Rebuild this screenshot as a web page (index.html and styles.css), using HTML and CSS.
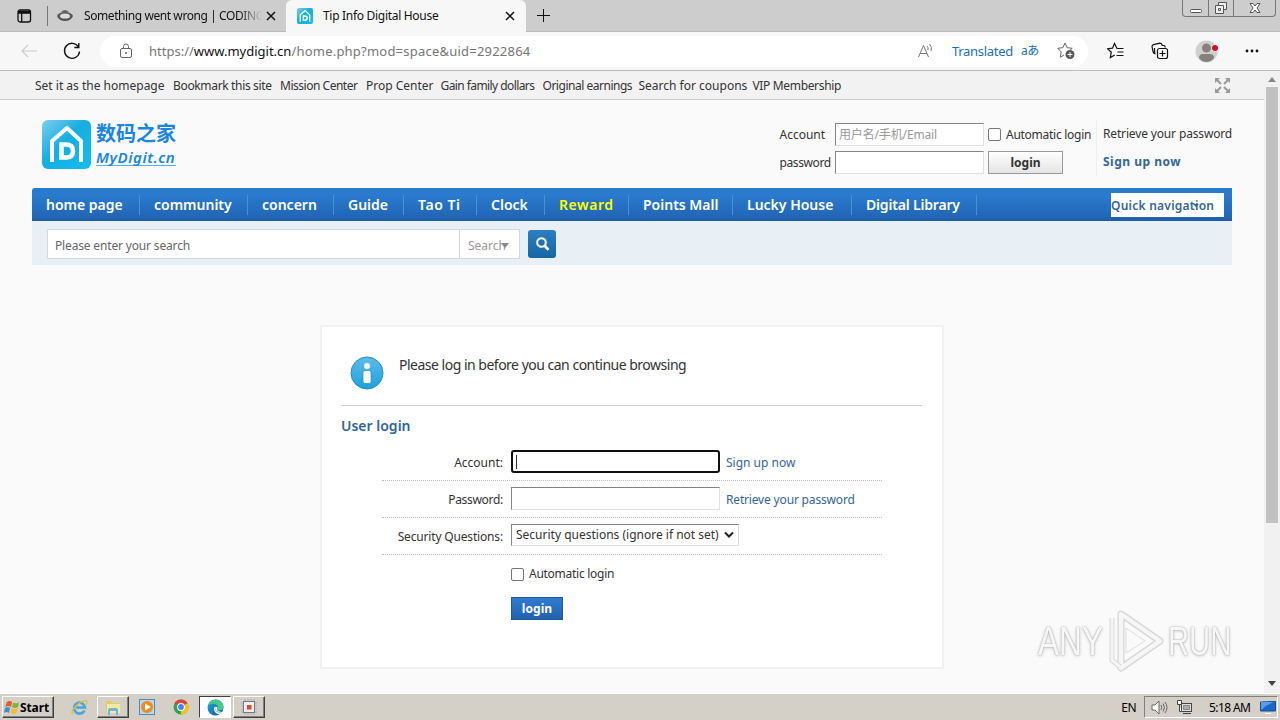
FILE: index.html
```html
<!DOCTYPE html>
<html lang="en">
<head>
    <meta charset="UTF-8">
    <title>Tip Info Digital House</title>
    <link rel="stylesheet" href="styles.css">
</head>
<body>
    <svg width="0" height="0" class="defs">
        <defs>
            <linearGradient id="house" x1="0" y1="0" x2="1" y2="1">
                <stop offset="0" stop-color="#7ccfee"/>
                <stop offset=".45" stop-color="#16aee0"/>
                <stop offset="1" stop-color="#12bdf0"/>
            </linearGradient>
            <linearGradient id="info" x1="0" y1="0" x2="0" y2="1">
                <stop offset="0" stop-color="#5cbcea"/>
                <stop offset="1" stop-color="#1da0dc"/>
            </linearGradient>
            <linearGradient id="edge" x1="0" y1="0" x2="1" y2="1">
                <stop offset="0" stop-color="#2aa5d8"/>
                <stop offset="1" stop-color="#0c59a4"/>
            </linearGradient>
            <symbol id="logo" viewBox="0 0 49 49">
                <rect width="49" height="49" rx="6" fill="url(#house)"/>
                <path d="M10 42V21L25 8l14 13v21" fill="none" stroke="#fff" stroke-width="4" stroke-linejoin="round"/>
                <path d="M19.500 24.500h4.500q7 0 7 6.500t-7 6.500h-4.500z" fill="none" stroke="#fff" stroke-width="4.500"/>
            </symbol>
        </defs>
    </svg>

    <div class="tabs">
        <svg class="tab-menu" width="16" height="16" viewBox="0 0 16 16" fill="none" stroke="#111" stroke-width="1.300"><rect x="2" y="2" width="12.500" height="12" rx="2"/><path d="M2 4.300h12.500" stroke-width="3"/><path d="M5.700 5v9"/></svg>
        <div class="tab tab-back">
            <svg width="18" height="16" viewBox="0 0 18 16"><path d="M1 8Q3 4 9 4t8 4q-2 5-8 5T1 8z" fill="#555"/><ellipse cx="9" cy="8" rx="5" ry="2.600" fill="#ddd"/><path d="M5 4q4-4 8 0" fill="#666"/></svg>
            <span class="tab-title">Something went wrong | CODING</span>
            <svg class="close" width="10" height="10" viewBox="0 0 10 10" stroke="#111" stroke-width="1.500"><path d="M1 1l8 8M9 1L1 9"/></svg>
        </div>
        <div class="tab tab-front">
            <svg width="16" height="16"><use href="#logo"/></svg>
            <span class="tab-title">Tip Info Digital House</span>
            <svg class="close" width="10" height="10" viewBox="0 0 10 10" stroke="#111" stroke-width="1.500"><path d="M1 1l8 8M9 1L1 9"/></svg>
        </div>
        <svg class="plus" width="15" height="15" viewBox="0 0 15 15" stroke="#111"><path d="M7.500 1v13M1 7.500h13"/></svg>
        <div class="win-buttons">
            <span><svg width="12" height="14" viewBox="0 0 12 14"><rect x=".5" y="8.500" width="11" height="3" rx="1" fill="#fff" stroke="#555"/></svg></span>
            <span><svg width="14" height="14" viewBox="0 0 14 14" fill="#eee" stroke="#555"><path d="M4.500 1.500h8v7h-8z"/><path d="M1.500 4.500h8v8h-8z"/><path d="M4.500 7.500h2v2h-2z"/></svg></span>
            <span><svg width="14" height="14" viewBox="0 0 14 14"><path d="M2 2.500h3l2 2.500 2-2.500h3L9 7l3 4.500H9L7 9l-2 2.500H2L5 7z" fill="#fff" stroke="#555"/></svg></span>
        </div>
    </div>

    <div class="toolbar">
        <svg class="back" width="18" height="16" viewBox="0 0 18 16" fill="none" stroke="#ccc" stroke-width="1.200"><path d="M17 8H2M8 2L2 8l6 6"/></svg>
        <svg class="reload" width="18" height="18" viewBox="0 0 18 18" fill="none" stroke="#111" stroke-width="1.400"><path d="M15.500 5A7.500 7.500 0 1 0 16.500 9.500M15.800 1v4.500h-4.500"/></svg>
        <div class="address">
            <svg class="lock" width="14" height="16" viewBox="0 0 14 16" fill="none" stroke="#666"><rect x="1.500" y="5.500" width="11" height="9" rx="1.500"/><path d="M4.500 5.500V3.500a2.500 2.500 0 0 1 5 0v2"/><circle cx="7" cy="10" r=".6" fill="#666"/></svg>
            <span class="url">https://<b>www.mydigit.cn</b><span class="path">/home.php?mod=space&amp;uid=2922864</span></span>
            <svg class="aloud" width="18" height="16" viewBox="0 0 18 16" fill="none" stroke="#777"><path d="M1.500 14L6.500 2.500 11.500 14M3.200 10.500h6.600M10 3q1.500 1.500 1 4M12.500 1q3 3 1.500 7"/></svg>
            <span class="translated">Translated</span>
            <span class="lang">aあ</span>
            <svg class="star" width="19" height="18" viewBox="0 0 19 18" fill="none" stroke="#666"><path d="M8 1l2.200 4.700 5 .6-3.700 3.500M7 13l-3.700 2.200.9-5.300L.8 6.300l5-.6L8 1"/><circle cx="13" cy="12.500" r="4.500" fill="#555" stroke="none"/><path d="M13 10v5M10.500 12.500h5" stroke="#fff"/></svg>
        </div>
        <svg class="favs" width="18" height="18" viewBox="0 0 18 18" fill="none" stroke="#111" stroke-width="1.200"><path d="M16.500 6.500H10L7.500 1.500l-2 4.700-5 .5 3.800 3.500-1 5.300 4.500-2.500M10.500 10h6M9.500 13.500h7"/></svg>
        <svg class="collections" width="18" height="18" viewBox="0 0 18 18" fill="none" stroke="#111" stroke-width="1.200"><path d="M4.500 12Q2.500 11.500 2 9.500L1 4.500Q1 3 2.500 2.600L9 1.200q1.800 0 2.300 2.300H13q1.200.3 1.200 2"/><path d="M4 11q-.5-1-.5-2V6"/><rect x="6.500" y="6.500" width="10" height="10" rx="2"/><path d="M11.500 8.500v6M8.500 11.500h6"/></svg>
        <svg class="avatar" width="24" height="23" viewBox="0 0 24 23"><circle cx="11.500" cy="11.500" r="11" fill="#d2d0ce"/><circle cx="11.500" cy="8" r="4.500" fill="#85817e"/><path d="M4 18q0-4 4-4h7q4 0 4 4-3 4-7.500 4T4 18z" fill="#85817e"/><circle cx="20" cy="8" r="3.500" fill="#fff"/><circle cx="20" cy="8" r="3" fill="#d50b1e"/></svg>
        <svg class="dots" width="14" height="4" viewBox="0 0 14 4" fill="#111"><circle cx="2" cy="2" r="1.400"/><circle cx="7" cy="2" r="1.400"/><circle cx="12" cy="2" r="1.400"/></svg>
    </div>

    <div class="viewport">
        <div class="page">
            <div class="topbar">
                <div class="toplinks">
                    <a>Set it as the homepage</a><a class="snug">Bookmark this site</a><a class="tight">Mission Center</a><a>Prop Center</a><a class="tighter">Gain family dollars</a><a class="tight">Original earnings</a><a>Search for coupons</a><a class="snug">VIP Membership</a>
                </div>
                <svg width="15" height="15" viewBox="0 0 15 15" fill="#999" stroke="#999" stroke-width="2"><path d="M2 2l4 4M13 2L9 6M2 13l4-4M13 13L9 9"/><path d="M0 0h5L0 5zM15 0h-5l5 5zM0 15h5l-5-5zM15 15h-5l5-5z" stroke="none"/></svg>
            </div>

            <div class="header">
                <div class="brand">
                    <svg width="49" height="49"><use href="#logo"/></svg>
                    <div class="brand-text">
                        <span class="brand-cn">数码之家</span>
                        <span class="brand-en">MyDigit.cn</span>
                    </div>
                </div>
                <div class="quick-login">
                    <span class="t-account">Account</span>
                    <span class="field">用户名/手机/Email</span>
                    <span class="auto"><i class="check"></i><span>Automatic login</span></span>
                    <span class="t-retrieve">Retrieve your password</span>
                    <span class="t-password">password</span>
                    <span class="field"></span>
                    <span class="btn-grey">login</span>
                    <b class="t-signup">Sign up now</b>
                </div>
            </div>

            <div class="nav">
                <a>home page</a><a>community</a><a>concern</a><a>Guide</a><a class="wide">Tao Ti</a><a>Clock</a><a class="hot wide">Reward</a><a>Points Mall</a><a>Lucky House</a><a class="narrow">Digital Library</a>
                <div class="quick-nav">Quick navigation<i></i></div>
            </div>

            <div class="search">
                <div class="search-input">Please enter your search</div>
                <div class="search-type">Search<i></i></div>
                <div class="search-btn"><svg width="16" height="16" viewBox="0 0 16 16" fill="none" stroke="#fff"><circle cx="6.500" cy="6.500" r="4.300" stroke-width="2"/><path d="M9.800 9.800l3.700 4" stroke-width="2.700"/></svg></div>
            </div>

            <div class="card">
                <div class="message">
                    <svg width="34" height="34" viewBox="0 0 34 34"><circle cx="17" cy="17" r="16" fill="url(#info)" stroke="#238fc4"/><circle cx="17" cy="10" r="3.400" fill="#fff" stroke="#238fc4" stroke-width=".5"/><rect x="13" y="14.500" width="8" height="13" rx="2" fill="#fff" stroke="#238fc4" stroke-width=".7"/></svg>
                    <p>Please log in before you can continue browsing</p>
                </div>
                <h3>User login</h3>
                <div class="form">
                    <div class="row">
                        <label>Account:</label>
                        <span class="input focused"><i class="caret"></i></span>
                        <a>Sign up now</a>
                    </div>
                    <div class="row">
                        <label class="l-password">Password:</label>
                        <span class="input"></span>
                        <a class="r-retrieve">Retrieve your password</a>
                    </div>
                    <div class="row">
                        <label class="l-security">Security Questions:</label>
                        <span class="select"><span>Security questions (ignore if not set)</span><svg width="10" height="8" viewBox="0 0 10 8" fill="none" stroke="#222" stroke-width="2"><path d="M1 1.500l4 4 4-4"/></svg></span>
                    </div>
                    <div class="row last">
                        <label></label>
                        <span class="auto"><i class="check"></i><span>Automatic login</span></span>
                    </div>
                    <div class="btn-blue">login</div>
                </div>
            </div>
        </div>

        <div class="scrollbar">
            <i class="up"></i>
            <div class="thumb"></div>
            <i class="down"></i>
        </div>

        <div class="watermark">
            <span>ANY</span>
            <svg width="58" height="64" viewBox="0 0 58 64" fill="none" stroke-linejoin="round"><path d="M14 5L53 32 14 59z" stroke="#d6d6d6" stroke-width="7"/><path d="M14 5L53 32 14 59z" stroke="#f6f6f6" stroke-width="4.500"/><path d="M19 19v25l19-12z" stroke="#dedede"/><path d="M5 9v42l8 7" stroke="#d8d8d8" stroke-width="5"/><path d="M5 9v42l8 7" stroke="#f4f4f4" stroke-width="3"/></svg>
            <span class="run">RUN</span>
        </div>
    </div>

    <div class="taskbar">
        <div class="start raised">
            <svg width="16" height="15" viewBox="0 0 16 15"><path d="M3 2q3-2 5 0L7 7Q4 5 1 7z" fill="#e8562a"/><path d="M9 2.500q3 1.500 6 0L14 7q-3 2-6 0z" fill="#7db73a"/><path d="M1 8q3-2 5 0l-1 5q-2-2-5 0z" fill="#3f8bd8"/><path d="M7.500 8q3 2 6 0l-1 5q-3 2-6 0z" fill="#f6bd24"/></svg>
            <b>Start</b>
        </div>
        <div class="task"><svg width="17" height="17" viewBox="0 0 17 17" fill="none"><path d="M13.500 11.500A5.500 5.500 0 1 1 14 8.500H5" stroke="#45a7e0" stroke-width="2.600"/><path d="M2 15Q-1 13 5 7t10.500-5q1 1-.5 4" stroke="#e9b93a" stroke-width="1.300"/></svg></div>
        <div class="task raised"><svg width="18" height="17" viewBox="0 0 18 17"><path d="M2 2h5l1 2h7v10H2z" fill="#e8c765"/><path d="M3 5h13v9H3z" fill="#f8e8a2"/><path d="M4 16v-5q0-2 2-2h6q2 0 2 2v5h-2v-4H6v4z" fill="#69b5dd"/></svg></div>
        <div class="task"><svg width="16" height="16" viewBox="0 0 16 16"><rect x=".5" y=".5" width="15" height="15" fill="#b8d8ee" stroke="#4d8dbd"/><circle cx="8" cy="8" r="6" fill="#f08a1c"/><path d="M6 4.500l6 3.500-6 3.500z" fill="#fff"/></svg></div>
        <div class="task"><svg width="16" height="16" viewBox="0 0 16 16"><circle cx="8" cy="8" r="7.500" fill="#35a350"/><path d="M8 8L1.500 4.250A7.500 7.500 0 0 1 14.500 4.250z" fill="#dd4436"/><path d="M8 8l6.500-3.750A7.500 7.500 0 0 1 8 15.500z" fill="#fbc116"/><circle cx="8" cy="8" r="3.900" fill="#fff"/><circle cx="8" cy="8" r="2.900" fill="#4484f0"/></svg></div>
        <div class="task sunken"><svg width="17" height="17" viewBox="0 0 17 17"><circle cx="8.500" cy="8.500" r="8" fill="url(#edge)"/><path d="M4 2Q10-1.500 14.500 3q2.500 3 2 6-1.500 3-5.500 2.500-1.500-1 0-3Q10 4 4 5 2 5.500 1 7q.5-3 3-5z" fill="#45c98a"/><path d="M8 7.500q-1 5 4 6 2 0 3.500-1-1 2-3 3.200Q7 14 7 10q0-2 1-2.500zM8 8.500q1-1.500 2.500 0l-.5 2.500q1 1.500 4 1.200-2 1-4 0-2-1.500-2-3.700z" fill="#fff"/></svg></div>
        <div class="task raised"><svg width="16" height="16" viewBox="0 0 16 16"><path d="M4 0v16M7 0v16M10 0v16M13 0v16M0 4h16M0 7h16M0 10h16M0 13h16" stroke="#aab"/><rect x="2.500" y="2.500" width="11" height="11" fill="#eee" stroke="#778"/><rect x="6" y="6" width="4.500" height="4.500" fill="#e24432"/></svg></div>
        <span class="ime">EN</span>
        <div class="tray">
            <svg width="17" height="15" viewBox="0 0 17 15" fill="#fff" stroke="#666"><path d="M1 5h3l4-4v13l-4-4H1z"/><path d="M10 5q1.500 2.500 0 5M12 3.500q3 4 0 8M14 2q4 5.500 0 11" fill="none"/></svg>
            <svg class="net" width="17" height="16" viewBox="0 0 17 16" fill="#ddd" stroke="#444"><rect x="5.500" y="4.500" width="10" height="8"/><path d="M7.500 6.500h6v4h-6z" fill="#aaa" stroke="#888"/><path d="M7 14.500h8M1.500 1.500h4v4h-4zM3.500 5.500v7h2" fill="#fff"/></svg>
            <span class="clock">5:18 AM</span>
            <svg class="desk" width="16" height="13" viewBox="0 0 16 13"><path d="M.5 1l15-.5v9.500L.5 10z" fill="#1b66c9" stroke="#164a8f"/><path d="M1 1l13 0Q6 4 1 9z" fill="#5b9de8"/><path d="M5 12.500h6" stroke="#fff"/></svg>
        </div>
    </div>
</body>
</html>
```
FILE: styles.css
```css
* {
    box-sizing: border-box;
}
body {
    margin: 0;
    width: 1280px;
    height: 720px;
    overflow: hidden;
    display: flex;
    flex-direction: column;
    font-family: "Noto Sans", "Noto Sans CJK SC", sans-serif;
    font-size: 12px;
    color: #333;
    white-space: nowrap;
}
.defs {
    position: absolute;
}
svg {
    display: block;
    flex: none;
}

/* browser */
.tabs {
    height: 32px;
    flex: none;
    background: #cdcdcd;
    border-bottom: 1px solid #bbb;
    display: flex;
    align-items: center;
    color: #111;
}
.tab-menu {
    margin: 0 15px 0 16px;
}
.tab {
    height: 32px;
    display: flex;
    align-items: center;
    letter-spacing: -.3px;
}
.tab-back {
    width: 239px;
    padding-left: 9px;
    background: linear-gradient(#777, #777) 0 6px / 1px 20px no-repeat;
}
.tab-back .tab-title {
    width: 178px;
    margin: 0 4px 0 10px;
    letter-spacing: -.42px;
    -webkit-mask-image: linear-gradient(90deg, #000 155px, transparent 178px);
}
.tab-front {
    width: 240px;
    padding-left: 11px;
    background: #f7f7f7;
    border-radius: 6px 6px 0 0;
}
.tab-front .tab-title {
    width: 183px;
    margin-left: 10px;
}
.tab-front .close {
    margin-left: -1px;
}
.plus {
    margin-left: 10px;
}
.win-buttons {
    margin: -15px 4px 0 auto;
    display: flex;
    border: 1px solid #777;
    border-top: 0;
    border-radius: 0 0 4px 4px;
    height: 17px;
}
.win-buttons span {
    width: 25px;
    display: flex;
    align-items: center;
    justify-content: center;
}
.win-buttons span + span {
    border-left: 1px solid #777;
}
.win-buttons span:last-child {
    width: 42px;
}
.toolbar {
    height: 39px;
    flex: none;
    background: #f7f7f7;
    border-bottom: 1px solid #bbb;
    display: flex;
    align-items: center;
}
.back {
    margin: 0 25px 0 20px;
}
.address {
    width: 988px;
    height: 31px;
    margin-left: 19px;
    border-radius: 16px;
    background: #fff;
    display: flex;
    align-items: center;
    font-size: 13px;
    color: #767676;
}
.lock {
    margin-left: 19px;
}
.url {
    width: 768px;
    margin-left: 16px;
}
.url b {
    font-weight: normal;
    color: #111;
}
.path {
    letter-spacing: .22px;
}
.translated {
    width: 69px;
    margin-left: 17px;
    color: #1a6fb5;
    letter-spacing: -.3px;
}
.lang {
    width: 36px;
    padding-bottom: 3px;
    color: #1a6fb5;
    font-size: 12px;
    letter-spacing: -.5px;
}
.favs {
    margin-left: 19px;
}
.collections {
    margin-left: 26px;
}
.avatar {
    margin-left: 26px;
}
.dots {
    margin-left: 26px;
}

/* page */
.viewport {
    height: 622px;
    flex: none;
    background: #fafafa;
    display: flex;
    position: relative;
}
.page {
    width: 1264px;
}
.topbar {
    height: 29px;
    padding: 0 34px 0 35px;
    background: #f2f2f2;
    border-bottom: 1px solid #ccc;
    display: flex;
    align-items: center;
    justify-content: space-between;
}
.toplinks {
    display: grid;
    grid-template-columns: 138px 107px 86px 74.500px 102px 96px 114px 90px;
}
.toplinks .snug {
    letter-spacing: -.34px;
}
.toplinks .tight {
    letter-spacing: -.48px;
}
.toplinks .tighter {
    letter-spacing: -.58px;
}
.header {
    height: 88px;
    padding-left: 42px;
    display: flex;
}
.brand {
    display: flex;
    padding-top: 20px;
    width: 737.500px;
}
.brand-text {
    margin: 0 0 0 5px;
    display: flex;
    flex-direction: column;
    color: #1a86e0;
    font-weight: bold;
}
.brand-cn {
    font-family: "Noto Sans CJK SC", sans-serif;
    font-size: 20px;
    line-height: 25px;
}
.brand-en {
    font-size: 15px;
    font-style: italic;
    font-weight: 600;
    letter-spacing: .55px;
    line-height: 24px;
    height: 21px;
    border-bottom: 1px solid #55b2ee;
}
.quick-login {
    display: grid;
    grid-template-columns: 55.500px 153px 108px 140px;
    grid-template-rows: 28px 28px;
    padding-top: 20px;
    align-items: center;
}
.t-password {
    letter-spacing: -.4px;
}
.field {
    width: 149px;
    height: 23px;
    padding-left: 3px;
    line-height: 22px;
    border: 1px solid;
    border-color: #848484 #e0e0e0 #e0e0e0 #848484;
    background: #fff;
    color: #999;
    letter-spacing: -.15px;
}
.auto {
    display: flex;
    align-items: center;
    gap: 5px;
    letter-spacing: -.27px;
}
.check {
    width: 13px;
    height: 13px;
    margin-top: 1px;
    border: 1px solid #767676;
    border-radius: 2px;
    background: #fff;
}
.t-retrieve, .t-signup {
    height: 28px;
    line-height: 28px;
    padding-left: 6px;
    border-left: 1px solid #eee;
    letter-spacing: -.15px;
}
.t-signup {
    color: #369;
    letter-spacing: .5px;
}
.btn-grey {
    width: 75px;
    height: 23px;
    line-height: 21px;
    text-align: center;
    font-weight: bold;
    border: 1px solid #999;
    background: linear-gradient(#fff, #e4e4e4);
}
.nav {
    width: 1200px;
    height: 33px;
    margin-left: 32px;
    display: grid;
    grid-template-columns: 108px 108px 86px 70px 73px 68px 84px 104px 119px 125px 255px;
    background: linear-gradient(#2b7acd, #2a7bd0 20%, #2165b5 90%, #1c5aa3);
    border-radius: 3px 0 0 0;
    color: #fff;
    font-size: 14px;
    font-weight: 600;
    line-height: 33px;
}
.nav a {
    padding-left: 14px;
    background: linear-gradient(#4a92d8, #4a92d8) 100% 7px / 1px 20px no-repeat;
}
.nav .hot {
    color: #ff0;
}
.nav .wide {
    letter-spacing: .55px;
}
.nav .narrow {
    letter-spacing: -.18px;
}
.quick-nav {
    width: 113px;
    height: 24px;
    margin: 5px 0 0 134px;
    background: #fff;
    color: #369;
    font-size: 12px;
    line-height: 25px;
    letter-spacing: .25px;
    position: relative;
}
.quick-nav i {
    position: absolute;
    left: 82px;
    top: 11px;
    border: 3px solid transparent;
    border-top-color: #369;
}
.search {
    width: 1200px;
    height: 44px;
    margin-left: 32px;
    padding: 8px 15px;
    background: #e8eff5;
    display: flex;
    color: #666;
    line-height: 31px;
}
.search-input {
    width: 413px;
    height: 30px;
    padding-left: 7px;
    background: #fff;
    border: 1px solid #ced9e0;
    letter-spacing: -.16px;
}
.search-type {
    width: 60px;
    height: 30px;
    padding-left: 8px;
    background: #fff;
    border: 1px solid #ced9e0;
    border-left: 0;
    color: #999;
    display: flex;
}
.search-type i {
    margin: 13px 0 0 -5px;
    border: 4px solid transparent;
    border-top: 5px solid #888;
}
.search-btn {
    width: 28px;
    height: 28px;
    margin: 1px 0 0 8px;
    border-radius: 3px;
    background: linear-gradient(#2c7fc0, #1765a4);
    padding: 6px 7px;
}
.card {
    width: 624px;
    height: 344px;
    margin: 60px 0 0 320px;
    padding: 0 20px 0 19px;
    border: 2px solid #f1f1f1;
    background: #fff;
}
.message {
    height: 79px;
    padding: 29px 0 0 9px;
    border-bottom: 1px solid #ccc;
    display: flex;
}
.message p {
    margin: -1px 0 0 15px;
    font-size: 14px;
    line-height: 20px;
    letter-spacing: -.5px;
}
.card h3 {
    margin: 10px 0 8px;
    font-size: 14px;
    line-height: 20px;
    font-weight: 600;
    color: #369;
}
.form {
    width: 500px;
    margin-left: 41px;
}
.row {
    height: 37px;
    display: flex;
    align-items: center;
    border-bottom: 1px dotted #bbb;
}
.row.last {
    border: 0;
}
.row label {
    width: 121px;
    margin-right: 8px;
    text-align: right;
}
.row .l-password {
    letter-spacing: -.3px;
}
.row .l-security {
    letter-spacing: -.17px;
}
.row a {
    margin-left: 6px;
    color: #369;
}
.row .r-retrieve {
    letter-spacing: -.17px;
}
.input {
    width: 209px;
    height: 23px;
    margin-top: -2px;
    border: 1px solid;
    border-color: #848484 #e0e0e0 #e0e0e0 #848484;
}
.input.focused {
    border: 2px solid #101010;
    border-radius: 3px;
    padding: 3px;
}
.caret {
    display: block;
    width: 1px;
    height: 14px;
    background: #333;
}
.select {
    width: 228px;
    height: 22px;
    margin-top: -3px;
    padding: 0 4px;
    border: 1px solid;
    border-color: #848484 #ddd #ddd #848484;
    display: flex;
    align-items: center;
    justify-content: space-between;
}
.btn-blue {
    width: 52px;
    height: 23px;
    margin: 5px 0 0 129px;
    line-height: 21px;
    text-align: center;
    color: #fff;
    font-size: 12px;
    letter-spacing: .1px;
    font-weight: bold;
    border: 1px solid #235994;
    background: linear-gradient(#2f7bd0, #2161b0);
}
.scrollbar {
    width: 16px;
    height: 622px;
    background: #f1f1f1;
    display: flex;
    flex-direction: column;
    align-items: center;
}
.scrollbar i {
    border: 4px solid transparent;
}
.scrollbar .up {
    margin-top: 2px;
    border-bottom: 5px solid #888;
}
.thumb {
    width: 12px;
    height: 436px;
    margin-top: 5px;
    background: #c1c1c1;
}
.scrollbar .down {
    margin-top: auto;
    margin-bottom: 3px;
    border-top: 5px solid #444;
}
.watermark {
    position: absolute;
    left: 1038px;
    top: 538px;
    display: flex;
    align-items: center;
    gap: 3px;
    color: #f7f7f7;
    font-family: "Liberation Sans", sans-serif;
    font-size: 40px;
    line-height: 64px;
    text-shadow: 0 0 2px #999, 0 1px 4px #ccc;
}
.watermark span {
    width: 66px;
    transform: scaleX(.79);
    transform-origin: 0 50%;
}
.watermark .run {
    transform: scaleX(.73);
}

/* taskbar */
.taskbar {
    height: 27px;
    flex: none;
    background: #d4d0c8;
    border-top: 1px solid #fff;
    display: flex;
    align-items: center;
    padding: 0 2px;
    color: #000;
}
.raised {
    border: 1px solid;
    border-color: #fff #404040 #404040 #fff;
    box-shadow: inset -1px -1px #808080;
}
.sunken {
    border: 1px solid;
    border-color: #404040 #fff #fff #404040;
    background: #fff;
}
.start {
    width: 52px;
    height: 22px;
    margin-right: 9px;
    padding-left: 1px;
    display: flex;
    align-items: center;
    letter-spacing: -.1px;
}
.task {
    width: 32px;
    height: 22px;
    margin-right: 2px;
    display: flex;
    align-items: center;
    justify-content: center;
}
.ime {
    margin-left: auto;
    letter-spacing: -.5px;
}
.tray {
    width: 134px;
    height: 22px;
    margin-left: 8px;
    padding-left: 6px;
    border: 1px solid;
    border-color: #808080 #fff #fff #808080;
    display: flex;
    align-items: center;
}
.net {
    margin-left: 8px;
}
.clock {
    width: 43px;
    margin-left: 16px;
    letter-spacing: -.6px;
}
.desk {
    margin-left: 8px;
}
```
